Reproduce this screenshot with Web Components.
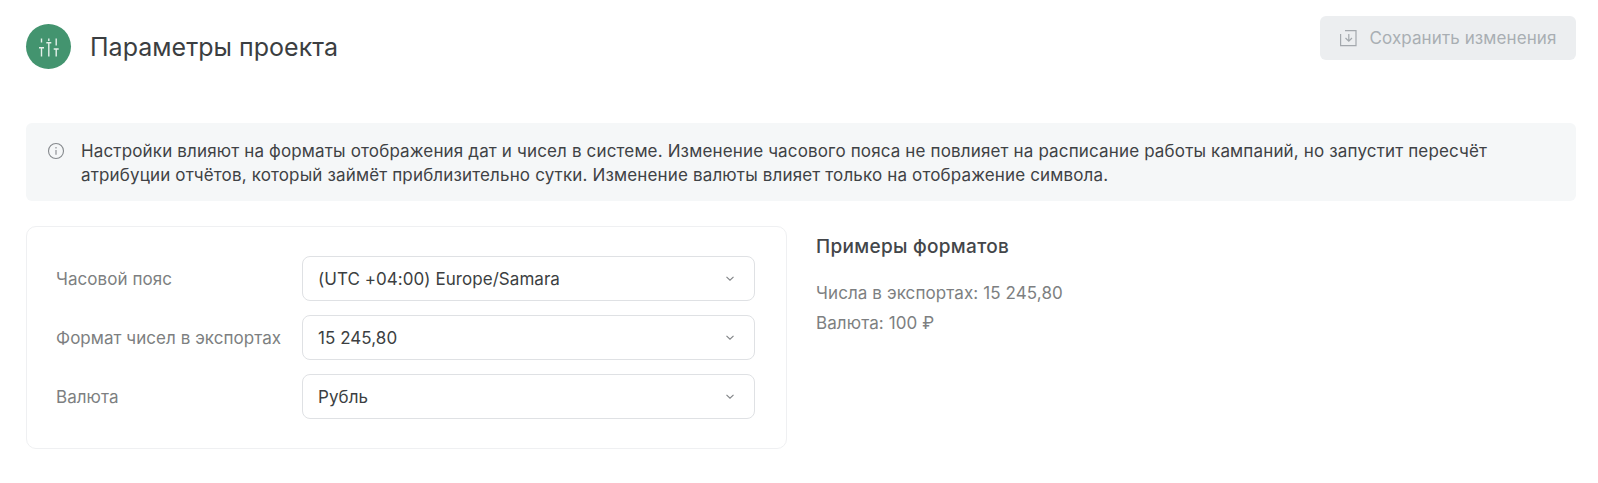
<!DOCTYPE html>
<html lang="ru">
<head>
<meta charset="utf-8">
<title>Параметры проекта</title>
<style>
  html,body{margin:0;background:#fff;}
  body{font-family:"Inter","Noto Sans",sans-serif;color:#3a3d40;}
</style>
</head>
<body>
<project-settings>
  <page-header slot="header" title="Параметры проекта" action="Сохранить изменения"></page-header>
  <info-alert slot="alert">Настройки влияют на форматы отображения дат и чисел в системе. Изменение часового пояса не повлияет на расписание работы кампаний, но запустит пересчёт атрибуции отчётов, который займёт приблизительно сутки. Изменение валюты влияет только на отображение символа.</info-alert>
  <settings-card slot="form">
    <select-row label="Часовой пояс" value="(UTC +04:00) Europe/Samara"></select-row>
    <select-row label="Формат чисел в экспортах" value="15 245,80"></select-row>
    <select-row label="Валюта" value="Рубль"></select-row>
  </settings-card>
  <format-examples slot="side" title="Примеры форматов">
    <div>Числа в экспортах: 15 245,80</div>
    <div>Валюта: 100 ₽</div>
  </format-examples>
</project-settings>

<script>
const projectStyle = `
<style>
  :host{display:block;padding:16px 22px 0 26px;}
  .top{margin-bottom:54px;}
  .alert{margin-bottom:25px;}
  .row{display:flex;align-items:flex-start;gap:29px;}
</style>
`;
class ProjectSettings extends HTMLElement {
  constructor() {
    super();
    this.attachShadow({ mode: "open" });
    this.shadowRoot.innerHTML = projectStyle + `
      <div class="top"><slot name="header"></slot></div>
      <div class="alert"><slot name="alert"></slot></div>
      <div class="row"><slot name="form"></slot><slot name="side"></slot></div>
    `;
  }
}
customElements.define("project-settings", ProjectSettings);

const headerStyle = `
<style>
  :host{display:flex;justify-content:space-between;align-items:flex-start;}
  .left{display:flex;align-items:center;gap:19px;padding-top:8px;}
  .badge{width:45px;height:45px;border-radius:50%;background:#43946f;display:flex;align-items:center;justify-content:center;}
  h1{margin:0;font-size:25px;font-weight:400;line-height:30px;color:#3b3e41;letter-spacing:.02px;}
  button{width:256px;height:44px;border:0;border-radius:6px;background:#eceef0;color:#a9aeb3;font:400 17px/20px "Inter",sans-serif;letter-spacing:.1px;display:flex;align-items:center;justify-content:center;gap:12px;padding:0;}
</style>
`;
class PageHeader extends HTMLElement {
  constructor() {
    super();
    this.attachShadow({ mode: "open" });
    this.shadowRoot.innerHTML = headerStyle + `
      <div class="left">
        <span class="badge">
          <svg width="22" height="22" viewBox="0 0 22 22" fill="none" stroke="#e4f0ea" stroke-width="1.4">
            <path d="M3.500 2.500v4M3.500 11.800v8.700M1 11.800h5M10.800 2.500v2.500M10.800 6.800v13.700M8.300 6.800h5M18.200 2.500v7M18.200 13v7.500M15.700 13h5"/>
          </svg>
        </span>
        <h1></h1>
      </div>
      <button disabled>
        <svg width="18" height="18" viewBox="0 0 18 18" fill="none" stroke="#a3a8ad" stroke-width="1.2">
          <path d="M6 1.600h11v15H1.600V5"/>
          <path d="M9.800 5v7M6.500 9l3.300 3.200L13 9"/>
        </svg>
        <span></span>
      </button>
    `;
    this.shadowRoot.querySelector("h1").textContent = this.getAttribute("title");
    this.shadowRoot.querySelector("button span").textContent = this.getAttribute("action");
  }
}
customElements.define("page-header", PageHeader);

class InfoAlert extends HTMLElement {
  constructor() {
    super();
    this.attachShadow({ mode: "open" });
    this.shadowRoot.innerHTML = `
      <style>
        :host{display:flex;gap:16px;background:#f5f7f8;border-radius:6px;padding:15.5px 60px 13.5px 21px;font-size:17px;letter-spacing:.15px;line-height:24.5px;color:#3f4245;}
        svg{flex:none;margin-top:3px;}
      </style>
      <svg width="18" height="18" viewBox="0 0 18 18" fill="none" stroke="#85898d" stroke-width="1.1">
        <circle cx="9" cy="9" r="7.500"/>
        <path d="M9 8v4.700M9 5v1.400"/>
      </svg>
      <div><slot></slot></div>
    `;
  }
}
customElements.define("info-alert", InfoAlert);

class SettingsCard extends HTMLElement {
  constructor() {
    super();
    this.attachShadow({ mode: "open" });
    this.shadowRoot.innerHTML = `
      <style>
        :host{display:flex;flex-direction:column;gap:14px;box-sizing:border-box;width:761px;height:223px;padding:29px 31px 0 29px;border:1px solid #eff0f2;border-radius:10px;background:#fff;}
      </style>
      <slot></slot>
    `;
  }
}
customElements.define("settings-card", SettingsCard);

class SelectRow extends HTMLElement {
  constructor() {
    super();
    this.attachShadow({ mode: "open" });
    this.shadowRoot.innerHTML = `
      <style>
        :host{display:flex;align-items:center;}
        label{width:246px;flex:none;font-size:17px;letter-spacing:.05px;color:#7d7f81;white-space:nowrap;}
        .box{flex:1;box-sizing:border-box;height:45px;border:1px solid #dfe1e4;border-radius:8px;display:flex;align-items:center;justify-content:space-between;padding:0 20px 0 15px;font-size:17px;letter-spacing:.05px;color:#3c3f42;}
      </style>
      <label></label>
      <div class="box">
        <span class="value"></span>
        <svg width="8" height="5" viewBox="0 0 8 5" fill="none" stroke="#808386" stroke-width="1.100"><path d="M.5 .8L4 4.200 7.500 .8"/></svg>
      </div>
    `;
    this.shadowRoot.querySelector("label").textContent = this.getAttribute("label");
    this.shadowRoot.querySelector(".value").textContent = this.getAttribute("value");
  }
}
customElements.define("select-row", SelectRow);

class FormatExamples extends HTMLElement {
  constructor() {
    super();
    this.attachShadow({ mode: "open" });
    this.shadowRoot.innerHTML = `
      <style>
        :host{display:block;padding-top:9px;font-size:17px;letter-spacing:.1px;line-height:30px;color:#7d7f81;}
        h2{margin:0 0 19px;font-size:19px;font-weight:500;letter-spacing:.3px;line-height:24px;color:#43464a;}
      </style>
      <h2></h2>
      <slot></slot>
    `;
    this.shadowRoot.querySelector("h2").textContent = this.getAttribute("title");
  }
}
customElements.define("format-examples", FormatExamples);
</script>
</body>
</html>
